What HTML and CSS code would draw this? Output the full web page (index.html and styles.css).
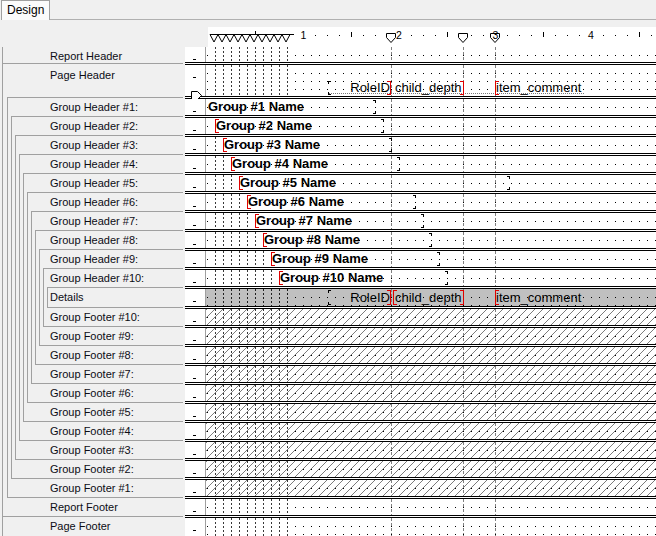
FILE: index.html
```html
<!DOCTYPE html>
<html>
<head>
<meta charset="utf-8">
<link rel="stylesheet" href="styles.css">
</head>
<body>
<div class="tabbar">
  <div class="tab">Design</div>
  <div class="tabfill"></div>
</div>
<div class="designer">
  <div class="labels">
    <div class="frame">
      <div class="lbl rh">Report Header</div>
      <div class="lbl ph">Page Header</div>
      <div class="grp g1">
        <div class="lbl">Group Header #1:</div>
        <div class="grp g2">
          <div class="lbl">Group Header #2:</div>
          <div class="grp g3">
            <div class="lbl">Group Header #3:</div>
            <div class="grp g4">
              <div class="lbl">Group Header #4:</div>
              <div class="grp g5">
                <div class="lbl">Group Header #5:</div>
                <div class="grp g6">
                  <div class="lbl">Group Header #6:</div>
                  <div class="grp g7">
                    <div class="lbl">Group Header #7:</div>
                    <div class="grp g8">
                      <div class="lbl">Group Header #8:</div>
                      <div class="grp g9">
                        <div class="lbl">Group Header #9:</div>
                        <div class="grp g10">
                          <div class="lbl">Group Header #10:</div>
                          <div class="det">Details</div>
                          <div class="lbl">Group Footer #10:</div>
                        </div>
                        <div class="lbl">Group Footer #9:</div>
                      </div>
                      <div class="lbl">Group Footer #8:</div>
                    </div>
                    <div class="lbl">Group Footer #7:</div>
                  </div>
                  <div class="lbl">Group Footer #6:</div>
                </div>
                <div class="lbl">Group Footer #5:</div>
              </div>
              <div class="lbl">Group Footer #4:</div>
            </div>
            <div class="lbl">Group Footer #3:</div>
          </div>
          <div class="lbl">Group Footer #2:</div>
        </div>
        <div class="lbl">Group Footer #1:</div>
      </div>
      <div class="lbl rf">Report Footer</div>
      <div class="lbl pf">Page Footer</div>
    </div>
  </div>

  <div class="surface">
    <div class="ruler">
      <svg class="ruler-svg" width="448" height="20" viewBox="0 0 448 20">
        <g fill="#000">
          <rect x="107" y="8" width="1" height="1"/><rect x="119" y="8" width="1" height="1"/><rect x="131" y="8" width="1" height="1"/>
          <rect x="155" y="8" width="1" height="1"/><rect x="167" y="8" width="1" height="1"/><rect x="179" y="8" width="1" height="1"/>
          <rect x="203" y="8" width="1" height="1"/><rect x="215" y="8" width="1" height="1"/><rect x="227" y="8" width="1" height="1"/>
          <rect x="251" y="8" width="1" height="1"/><rect x="263" y="8" width="1" height="1"/><rect x="275" y="8" width="1" height="1"/>
          <rect x="299" y="8" width="1" height="1"/><rect x="311" y="8" width="1" height="1"/><rect x="323" y="8" width="1" height="1"/>
          <rect x="347" y="8" width="1" height="1"/><rect x="359" y="8" width="1" height="1"/><rect x="371" y="8" width="1" height="1"/>
          <rect x="395" y="8" width="1" height="1"/><rect x="407" y="8" width="1" height="1"/><rect x="419" y="8" width="1" height="1"/>
          <rect x="443" y="8" width="1" height="1"/>
          <rect x="47" y="4" width="1" height="5"/><rect x="143" y="5" width="1" height="5"/><rect x="239" y="5" width="1" height="5"/>
          <rect x="335" y="5" width="1" height="5"/><rect x="431" y="5" width="1" height="5"/>
        </g>
        <g fill="#fff" stroke="#000" stroke-width="1">
          <path d="M2 7.5 H86"/>
          <polygon points="2,7.5 10,7.5 6,15"/><polygon points="10,7.5 18,7.5 14,15"/><polygon points="18,7.5 26,7.5 22,15"/>
          <polygon points="26,7.5 34,7.5 30,15"/><polygon points="34,7.5 42,7.5 38,15"/><polygon points="42,7.5 50,7.5 46,15"/>
          <polygon points="50,7.5 58,7.5 54,15"/><polygon points="58,7.5 66,7.5 62,15"/><polygon points="66,7.5 74,7.5 70,15"/>
          <polygon points="74,7.5 82,7.5 78,15"/>
          <polygon points="178.5,6.5 187.5,6.5 187.5,10.5 183,15.5 178.5,10.5"/>
          <polygon points="250.5,6.5 259.5,6.5 259.5,10.5 255,15.5 250.5,10.5"/>
          <polygon points="282.5,6.5 291.5,6.5 291.5,10.5 287,15.5 282.5,10.5"/>
        </g>
        <g class="rnum" text-anchor="middle">
          <text x="95.5" y="11.5">1</text>
          <text x="191" y="11.5">2</text>
          <text x="287.5" y="11.5">3</text>
          <text x="383" y="11.5">4</text>
        </g>
      </svg>
    </div>

    <div class="band b-rh"><div class="mk"></div><div class="cv"><div class="ind"></div></div></div>
    <div class="sep"></div>

    <div class="band b-ph">
      <div class="mk">
        <svg class="tag" width="12" height="9" viewBox="0 0 12 9"><polygon points="0.5,0.5 6.5,0.5 10.5,4.5 6.5,8.5 0.5,8.5" fill="#fff" stroke="#000"/></svg>
      </div>
      <div class="cv">
        <div class="ind"></div>
        <div class="uline"></div>
        <div class="fld data f-role lb-blk rb-red">RoleID</div>
        <div class="fld data f-child rb-red">child_depth</div>
        <div class="fld data f-item lb-red">item_comment</div>
      </div>
    </div>
    <div class="sep"></div>

    <div class="band b-gh"><div class="mk"></div><div class="cv">
      <div class="fld gname rb-blk" style="--k:1">Group #1 Name</div>
    </div></div>
    <div class="sep"></div>
    <div class="band b-gh"><div class="mk"></div><div class="cv">
      <div class="fld gname lb-red rb-blk" style="--k:2">Group #2 Name</div>
    </div></div>
    <div class="sep"></div>
    <div class="band b-gh"><div class="mk"></div><div class="cv">
      <div class="ind" style="--n:1"></div>
      <div class="fld gname lb-red rb-blk" style="--k:3">Group #3 Name</div>
    </div></div>
    <div class="sep"></div>
    <div class="band b-gh"><div class="mk"></div><div class="cv">
      <div class="ind" style="--n:2"></div>
      <div class="fld gname lb-red rb-blk" style="--k:4">Group #4 Name</div>
    </div></div>
    <div class="sep"></div>
    <div class="band b-gh"><div class="mk"></div><div class="cv">
      <div class="ind" style="--n:3"></div>
      <div class="fld gname lb-red rb-blk" style="--k:5; --w:271px">Group #5 Name</div>
    </div></div>
    <div class="sep"></div>
    <div class="band b-gh"><div class="mk"></div><div class="cv">
      <div class="ind" style="--n:4"></div>
      <div class="fld gname lb-red rb-blk" style="--k:6">Group #6 Name</div>
    </div></div>
    <div class="sep"></div>
    <div class="band b-gh"><div class="mk"></div><div class="cv">
      <div class="ind" style="--n:5"></div>
      <div class="fld gname lb-red rb-blk" style="--k:7">Group #7 Name</div>
    </div></div>
    <div class="sep"></div>
    <div class="band b-gh"><div class="mk"></div><div class="cv">
      <div class="ind" style="--n:6"></div>
      <div class="fld gname lb-red rb-blk" style="--k:8">Group #8 Name</div>
    </div></div>
    <div class="sep"></div>
    <div class="band b-gh"><div class="mk"></div><div class="cv">
      <div class="ind" style="--n:7"></div>
      <div class="fld gname lb-red rb-blk" style="--k:9">Group #9 Name</div>
    </div></div>
    <div class="sep"></div>
    <div class="band b-gh"><div class="mk"></div><div class="cv">
      <div class="ind" style="--n:8"></div>
      <div class="fld gname lb-red rb-blk" style="--k:10">Group #10 Name</div>
    </div></div>
    <div class="sep"></div>

    <div class="band b-det"><div class="mk"></div><div class="cv grey">
      <div class="ind dark"></div>
      <div class="fld data f-role lb-blk rb-red">RoleID</div>
      <div class="fld data f-child lb-red rb-red">child_depth</div>
      <div class="fld data f-item lb-red">item_comment</div>
    </div></div>
    <div class="sep"></div>

    <div class="band b-gf"><div class="mk"></div><div class="cv hatch"><div class="ind"></div></div></div>
    <div class="sep"></div>
    <div class="band b-gf"><div class="mk"></div><div class="cv hatch"><div class="ind"></div></div></div>
    <div class="sep"></div>
    <div class="band b-gf"><div class="mk"></div><div class="cv hatch"><div class="ind"></div></div></div>
    <div class="sep"></div>
    <div class="band b-gf"><div class="mk"></div><div class="cv hatch"><div class="ind"></div></div></div>
    <div class="sep"></div>
    <div class="band b-gf"><div class="mk"></div><div class="cv hatch"><div class="ind"></div></div></div>
    <div class="sep"></div>
    <div class="band b-gf"><div class="mk"></div><div class="cv hatch"><div class="ind"></div></div></div>
    <div class="sep"></div>
    <div class="band b-gf"><div class="mk"></div><div class="cv hatch"><div class="ind"></div></div></div>
    <div class="sep"></div>
    <div class="band b-gf"><div class="mk"></div><div class="cv hatch"><div class="ind"></div></div></div>
    <div class="sep"></div>
    <div class="band b-gf"><div class="mk"></div><div class="cv hatch"><div class="ind"></div></div></div>
    <div class="sep"></div>
    <div class="band b-gf"><div class="mk"></div><div class="cv hatch"><div class="ind"></div></div></div>
    <div class="sep"></div>

    <div class="band b-rf"><div class="mk"></div><div class="cv"><div class="ind"></div></div></div>
    <div class="sep"></div>
    <div class="band b-pf"><div class="mk"></div><div class="cv"><div class="ind"></div></div></div>
  </div>
</div>
</body>
</html>
```

FILE: styles.css
```css
* { box-sizing: border-box; margin: 0; padding: 0; }
html, body { width: 656px; height: 536px; overflow: hidden; }
body {
  background: #f0f0f0;
  font-family: "Liberation Sans", Arial, sans-serif;
  color: #000;
}

/* tab strip */
.tabbar { display: flex; height: 20px; }
.tab {
  width: 49px;
  margin-left: 1px;
  height: 20px;
  border: 1px solid #a0a0a0;
  border-bottom: 0;
  background: #fbfbfb;
  font-size: 12px;
  line-height: 14px;
  padding: 2px 0 0 5px;
}
.tabfill { flex: 1; border-bottom: 1px solid #b0b0b0; }

.designer { display: flex; height: 516px; }

/* section labels */
.labels { width: 185px; padding-top: 27px; flex: none; }
.frame {
  margin: 0 2px;
  border-left: 1px solid #a0a0a0;
  height: 489px;
}
.lbl {
  height: 18px;
  font-size: 11px;
  line-height: 13px;
  padding-top: 3px;
  white-space: nowrap;
  color: #0c0c14;
}
.lbl.rh { height: 17px; border-bottom: 1px solid #a0a0a0; padding-left: 47px; }
.lbl.ph { height: 33px; padding-left: 47px; padding-top: 5px; }
.lbl.rf { height: 19px; border-bottom: 1px solid #a0a0a0; padding-left: 47px; }
.lbl.pf { height: 19px; padding-left: 47px; }

.grp {
  border: 1px solid #a0a0a0;
  border-right: 0;
  margin-left: 3px;
}
.g1 { margin-left: 4px; }
.g1 > .lbl { padding-left: 42px; }
.g2 > .lbl { padding-left: 38px; }
.g3 > .lbl { padding-left: 34px; }
.g4 > .lbl { padding-left: 30px; }
.g5 > .lbl { padding-left: 26px; }
.g6 > .lbl { padding-left: 22px; }
.g7 > .lbl { padding-left: 18px; }
.g8 > .lbl { padding-left: 14px; }
.g9 > .lbl { padding-left: 10px; }
.g10 > .lbl { padding-left: 6px; }
.det {
  height: 21px;
  margin-left: 3px;
  border: 1px solid #a0a0a0;
  border-right: 0;
  font-size: 11px;
  line-height: 13px;
  padding: 3px 0 0 2px;
  color: #0c0c14;
}

/* design surface */
.surface { width: 471px; flex: none; }
.ruler { height: 27px; padding: 7px 0 0 23px; }
.ruler-svg { display: block; background: #fff; }
.rnum { font-family: "Liberation Sans", Arial, sans-serif; font-size: 10.5px; fill: #000; }

.band { display: flex; }
.b-rh { height: 15px; }
.b-ph { height: 31px; }
.b-gh { height: 16px; }
.b-det { height: 17px; }
.b-gf { height: 16px; }
.b-rf { height: 16px; }
.b-pf { height: 19px; }

.sep {
  height: 3px;
  background: linear-gradient(#000 0 1px, #fff 1px 2px, #000 2px 3px);
}

.mk {
  width: 21px;
  flex: none;
  background: #fff;
  border-right: 1px solid #a0a0a0;
  position: relative;
}
.mk::after {
  content: "";
  position: absolute;
  left: 8px;
  top: 12px;
  width: 3px;
  height: 1px;
  background: #000;
}
.tag { position: absolute; left: 6px; top: 26px; display: block; }

.cv {
  flex: 1;
  position: relative;
  padding-top: 8px;
  background-color: #fff;
  background-image:
    conic-gradient(from 270deg at 1px 1px, #000 90deg, transparent 0),
    repeating-linear-gradient(#808080 0 3px, transparent 3px 5px),
    repeating-linear-gradient(#808080 0 3px, transparent 3px 5px),
    repeating-linear-gradient(#808080 0 3px, transparent 3px 5px);
  background-size: 8px 8px, 1px 100%, 1px 100%, 1px 100%;
  background-position: 1px 0, 185px 0, 257px 0, 289px 0;
  background-repeat: repeat, no-repeat, no-repeat, no-repeat;
  background-origin: content-box, border-box, border-box, border-box;
  background-clip: content-box, border-box, border-box, border-box;
}
.cv.grey { background-color: #c0c0c0; }
.cv.hatch {
  background-image:
    conic-gradient(from 270deg at 1px 1px, #000 90deg, transparent 0),
    repeating-linear-gradient(#808080 0 3px, transparent 3px 5px),
    repeating-linear-gradient(#808080 0 3px, transparent 3px 5px),
    repeating-linear-gradient(#808080 0 3px, transparent 3px 5px),
    repeating-linear-gradient(135deg, #7c7c7c 0 0.9px, transparent 0.9px 5.657px);
  background-size: 8px 8px, 1px 100%, 1px 100%, 1px 100%, auto;
  background-position: 1px 0, 185px 0, 257px 0, 289px 0, 0 0;
  background-repeat: repeat, no-repeat, no-repeat, no-repeat, repeat;
  background-origin: content-box, border-box, border-box, border-box, border-box;
  background-clip: content-box, border-box, border-box, border-box, border-box;
}

/* indent guide lines (one per group level) */
.ind {
  position: absolute;
  left: 9px;
  top: 0;
  bottom: 0;
  width: calc(var(--n, 10) * 8px - 7px);
  background: linear-gradient(to right, #383838 1px, transparent 1px) 0 0 / 8px 100%;
  -webkit-mask-image: repeating-linear-gradient(#000 0 2px, transparent 2px 4px);
  mask-image: repeating-linear-gradient(#000 0 2px, transparent 2px 4px);
}
.ind.dark { background: linear-gradient(to right, #202020 1px, transparent 1px) 0 0 / 8px 100%; }

/* report fields */
.fld {
  position: absolute;
  white-space: nowrap;
  font-size: 13px;
}
.gname {
  top: 1px;
  height: 14px;
  line-height: 14px;
  left: calc(1px + (var(--k) - 1) * 8px);
  width: var(--w, 169px);
  font-weight: bold;
  padding-left: 1px;
}
.b-ph .data { top: 16px; height: 14px; line-height: 14px; }
.b-det .data { top: 1px; height: 15px; line-height: 15px; }
.f-role { left: 122px; width: 63px; text-align: right; padding-right: 1px; }
.f-child { left: 187px; width: 71px; padding-left: 2px; }
.f-item { left: 289px; width: 89px; padding-left: 1px; }
.uline {
  position: absolute;
  left: 122px;
  top: 28px;
  width: 256px;
  border-top: 1px dotted #7a7a7a;
}

.lb-red::before {
  content: "";
  position: absolute;
  left: 0; top: 0; bottom: 0;
  width: 3px;
  border: 1px solid #e00000;
  border-right: 0;
}
.rb-red::after {
  content: "";
  position: absolute;
  right: 0; top: 0; bottom: 0;
  width: 3px;
  border: 1px solid #e00000;
  border-left: 0;
}
.lb-blk::before {
  content: "";
  position: absolute;
  left: 0; top: 0; bottom: 0;
  width: 3px;
  background:
    linear-gradient(#000, #000) 0 0 / 3px 1px no-repeat,
    linear-gradient(#000, #000) 0 0 / 1px 3px no-repeat,
    linear-gradient(#000, #000) 0 100% / 3px 1px no-repeat,
    linear-gradient(#000, #000) 0 100% / 1px 3px no-repeat;
}
.rb-blk::after {
  content: "";
  position: absolute;
  right: 0; top: 0; bottom: 0;
  width: 3px;
  background:
    linear-gradient(#000, #000) 100% 0 / 3px 1px no-repeat,
    linear-gradient(#000, #000) 100% 0 / 1px 3px no-repeat,
    linear-gradient(#000, #000) 100% 100% / 3px 1px no-repeat,
    linear-gradient(#000, #000) 100% 100% / 1px 3px no-repeat;
}
```
